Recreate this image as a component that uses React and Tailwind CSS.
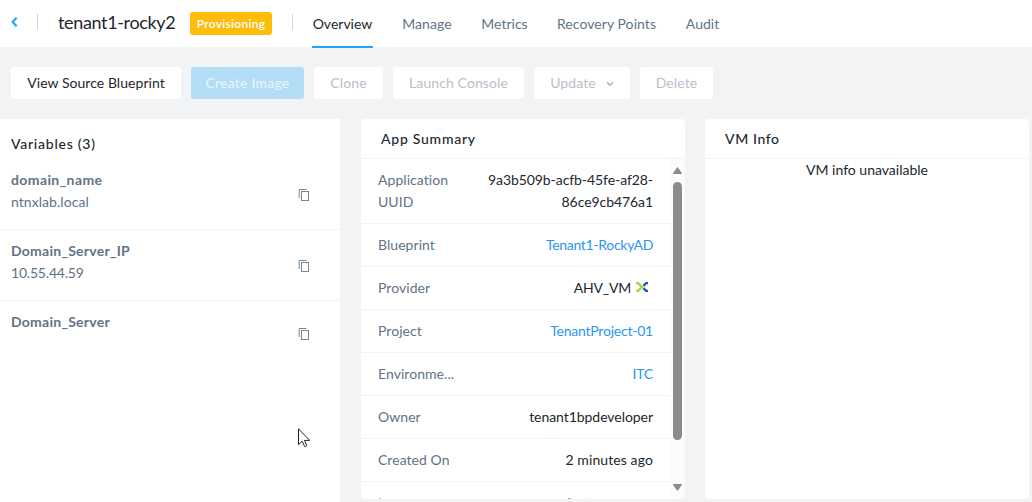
import React from "react";

const tabs = [
  { label: "Overview", box: "w-[61px] text-[#22272e] border-[#22a5f7]", text: "tracking-[0px]" },
  { label: "Manage", box: "w-[52px] text-[#627386] border-transparent", text: "tracking-[0.1px]" },
  { label: "Metrics", box: "w-[47px] text-[#627386] border-transparent", text: "tracking-[0px]" },
  { label: "Recovery Points", box: "w-[101px] text-[#627386] border-transparent", text: "tracking-[0.07px]" },
  { label: "Audit", box: "w-[35px] text-[#627386] border-transparent", text: "tracking-[0px]" },
];

const actions = [
  { label: "View Source Blueprint", style: "w-[170px] bg-white text-[#22272e] tracking-[0.05px]" },
  { label: "Create Image", style: "w-[113px] bg-[#b3dcf6] text-[#e9f4fc] font-medium tracking-[0.2px]" },
  { label: "Clone", style: "w-[69px] bg-white text-[#b8bfca] tracking-[0.1px]" },
  { label: "Launch Console", style: "w-[131px] bg-white text-[#b8bfca] tracking-[0.1px]" },
  { label: "Update", style: "w-[96px] bg-white text-[#b8bfca] tracking-[0.1px]", menu: true },
  { label: "Delete", style: "w-[73px] bg-white text-[#b8bfca] tracking-[0.1px]" },
];

const variables = [
  { name: "domain_name", value: "ntnxlab.local", row: "h-[61px]", icon: "mt-[20px]", nameStyle: "tracking-[0.4px]", valueStyle: "tracking-[0.05px]" },
  { name: "Domain_Server_IP", value: "10.55.44.59", row: "h-[71px] pt-[10px]", icon: "mt-[20px]", nameStyle: "tracking-[0.25px]", valueStyle: "tracking-[-0.2px]" },
  { name: "Domain_Server", value: "", row: "h-[71px] pt-[10px] border-b-0", icon: "mt-[17px]", nameStyle: "tracking-[0.25px]", valueStyle: "" },
];

const summary = [
  { label: "Blueprint", value: "Tenant1-RockyAD", l: "tracking-[0.05px]", v: "text-[#2a96f3] tracking-[-0.3px]" },
  { label: "Provider", value: "AHV_VM", l: "tracking-[0.05px]", v: "text-[#22272e] tracking-[-0.2px]", logo: true },
  { label: "Project", value: "TenantProject-01", l: "tracking-[0.05px]", v: "text-[#2a96f3] tracking-[-0.22px]" },
  { label: "Environme...", value: "ITC", l: "tracking-[0.05px]", v: "text-[#2a96f3] tracking-[-0.2px]" },
  { label: "Owner", value: "tenant1bpdeveloper", l: "tracking-[0.05px]", v: "text-[#22272e] tracking-[-0.05px]" },
  { label: "Created On", value: "2 minutes ago", l: "tracking-[0.05px]", v: "text-[#22272e] tracking-[0.1px]" },
];

function CopyIcon() {
  return (
    <svg className="h-3 w-3" viewBox="0 0 12 12" fill="none" stroke="#77879a" strokeWidth="1">
      <path d="M8.5 .5H1.2V9" />
      <rect x="3.5" y="2.5" width="7" height="9" />
    </svg>
  );
}

function ProviderLogo() {
  return (
    <svg className="h-[10px] w-[12px]" viewBox="0 0 12 10" fill="none" strokeWidth="2.2">
      <path d="M.3 1.2H2L6 5 2 8.8H.3" stroke="#a9cf38" />
      <path d="M12 1.2H10.2L7.4 3.9M7.4 6.1 10.2 8.8H12" stroke="#1f57a0" />
    </svg>
  );
}

function Header() {
  return (
    <header className="flex h-[47px] shrink-0 bg-white">
      <svg className="ml-[11px] mt-[17px] h-[10px] w-[7px] shrink-0" viewBox="0 0 7 10" fill="none" stroke="#22a5f7" strokeWidth="2.2">
        <path d="M5.6 .8 1.6 5l4 4.2" />
      </svg>
      <div className="ml-[19px] mt-[14px] h-4 w-px shrink-0 bg-[#d1d5dc]" />
      <h1 className="ml-5 mt-[10px] w-[132px] shrink-0 whitespace-nowrap text-[18px] leading-6 tracking-[-0.35px] text-[#22272e]">tenant1-rocky2</h1>
      <div className="mt-3 flex h-[23px] w-[82px] shrink-0 items-center justify-center rounded-[3px] bg-[#ffbc0b] text-[12px] font-semibold leading-none tracking-[0.3px] text-white">Provisioning</div>
      <div className="ml-5 mt-[14px] h-4 w-px shrink-0 bg-[#d1d5dc]" />
      <nav className="ml-[19px] flex gap-7">
        {tabs.map((t) => (
          <div key={t.label} className={`flex h-12 shrink-0 justify-center whitespace-nowrap border-b-2 pt-[13px] text-[14px] leading-[21px] ${t.box}`}>
            <span className={t.text}>{t.label}</span>
          </div>
        ))}
      </nav>
    </header>
  );
}

export default function App() {
  return (
    <div className="flex h-[502px] w-[1032px] flex-col overflow-hidden bg-[#f2f3f5] font-['Lato',sans-serif] text-[14px] leading-[22px]">
      <Header />
      <div className="mt-5 flex h-8 shrink-0 gap-[10px] pl-[11px]">
        {actions.map((a) => (
          <button key={a.label} className={`flex h-8 shrink-0 items-center justify-center whitespace-nowrap rounded-[3px] ${a.style}`}>
            <span>{a.label}</span>
            {a.menu && (
              <svg className="ml-[10px] mt-px h-[6px] w-2" viewBox="0 0 8 6" fill="none" stroke="#a9b2bf" strokeWidth="1.5">
                <path d="M1 1.2 4 4.2 7 1.2" />
              </svg>
            )}
          </button>
        ))}
      </div>
      <main className="mt-5 flex h-[383px] shrink-0 items-start">
        <section className="h-[383px] w-[340px] bg-white">
          <h2 className="h-[50px] pl-[11px] pt-[14px] font-medium tracking-[0.75px] text-[#22272e]">Variables (3)</h2>
          {variables.map((v) => (
            <div key={v.name} className={`flex items-start justify-between border-b border-[#f2f3f5] pl-[11px] pr-[30px] text-[#627386] ${v.row}`}>
              <div>
                <div className={`font-bold ${v.nameStyle}`}>{v.name}</div>
                <div className={v.valueStyle}>{v.value}</div>
              </div>
              <div className={v.icon}><CopyIcon /></div>
            </div>
          ))}
        </section>

        <section className="ml-[21px] flex h-[380px] w-[324px] flex-col overflow-hidden rounded-[4px] bg-white">
          <h2 className="h-10 shrink-0 border-b border-[#f2f3f5] pl-5 pt-[9px] font-medium tracking-[0.75px] text-[#22272e]">App Summary</h2>
          <div className="flex h-[340px]">
            <div className="w-[309px] overflow-hidden">
              <div className="flex h-[65px] justify-between border-b border-[#f2f3f5] px-[17px] pt-[10px]">
                <div className="text-[#627386]">
                  <div className="tracking-[0.05px]">Application</div>
                  <div className="tracking-[0.05px]">UUID</div>
                </div>
                <div className="text-right text-[#22272e]">
                  <div className="tracking-[-0.07px]">9a3b509b-acfb-45fe-af28-</div>
                  <div className="tracking-[-0.07px]">86ce9cb476a1</div>
                </div>
              </div>
              {summary.map((r) => (
                <div key={r.label} className="flex h-[43px] justify-between whitespace-nowrap border-b border-[#f2f3f5] px-[17px] pt-[10px]">
                  <span className={`text-[#627386] ${r.l}`}>{r.label}</span>
                  <span className={`flex ${r.v}`}>
                    {r.value}
                    {r.logo && <span className="ml-[5px] mr-[5px] mt-[5px]"><ProviderLogo /></span>}
                  </span>
                </div>
              ))}
              <div className="flex h-[17px] justify-between overflow-hidden px-[17px] pt-3">
                <svg className="h-[5px] w-2" viewBox="0 0 8 5" fill="#c9b4a0"><rect x="1" y="4" width="2" height="1" /></svg>
                <svg className="h-[5px] w-[87px]" viewBox="0 0 87 5" fill="#a5a5ac"><rect x="2" y="4" width="3" height="1" /><rect x="23" y="4" width="1" height="1" opacity=".4" /></svg>
              </div>
            </div>
            <div className="flex w-[15px] flex-col items-center bg-[#fcfcfc]">
              <svg className="mt-2 h-[7px] w-[9px]" viewBox="0 0 9 7"><path d="M4.5 0 9 6.2 8.4 7H.6L0 6.2Z" fill="#8b8b8b" /></svg>
              <div className="mt-2 h-[258px] w-[9px] rounded-full bg-[#8b8b8b]" />
              <svg className="mt-11 h-[7px] w-[9px]" viewBox="0 0 9 7"><path d="M4.5 7 9 .8 8.4 0H.6L0 .8Z" fill="#8b8b8b" /></svg>
            </div>
          </div>
        </section>

        <section className="ml-5 h-[380px] w-[324px] rounded-[4px] bg-white">
          <h2 className="h-10 border-b border-[#f2f3f5] pl-5 pt-[9px] font-medium tracking-[0.6px] text-[#22272e]">VM Info</h2>
          <div className="text-center text-[#22272e]">VM info unavailable</div>
        </section>
      </main>
      <svg className="absolute left-[298px] top-[428px] h-[20px] w-[13px]" viewBox="0 0 13 20" fill="#fff" stroke="#20202c" strokeWidth="1">
        <path d="M.5 .8V16.6L4.2 13.2 6.6 18.4Q7.8 19.2 8.8 17.6L6.5 12.4H11.7Z" />
      </svg>
    </div>
  );
}
